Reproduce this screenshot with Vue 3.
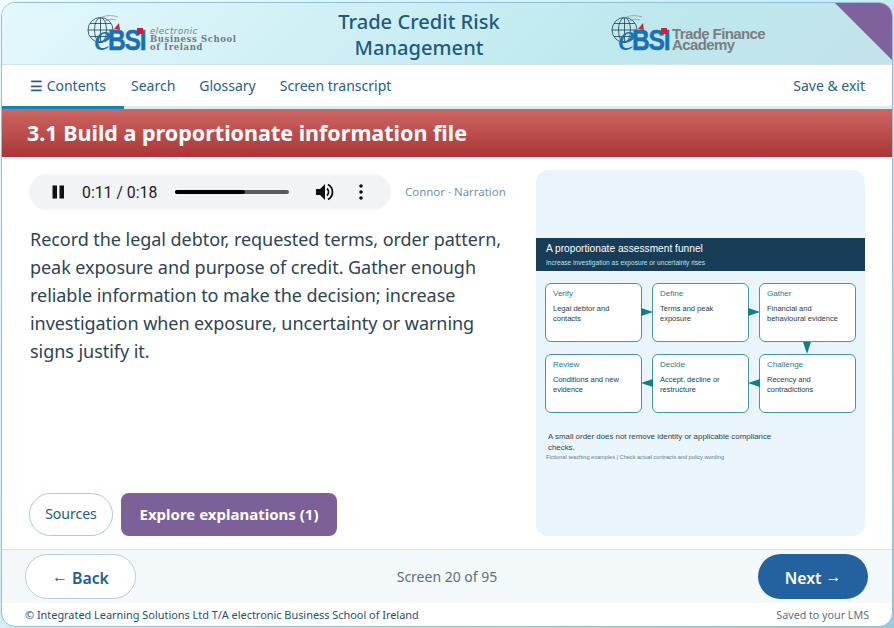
<template>
  <div class="shell">
    <header class="banner">
      <div class="logo left-logo">
        <div class="mark">
          <svg class="globe" viewBox="0 0 38 30" width="38" height="30">
            <g fill="none" stroke="#1f3f52" stroke-width="0.8">
              <circle cx="13.500" cy="15" r="12.500" />
              <ellipse cx="13.500" cy="15" rx="6" ry="12.500" />
              <path d="M1 15h25M3 8.500h21M3 21.500h21M13.500 2.500v25" />
            </g>
            <path d="M13 3c6-3 12-3 18-1M18 6c4-2 8-2 11-1" fill="none" stroke="#8a9aa4" stroke-width="0.8" />
            <path d="M27 14l5-6 1 7z" fill="#d9232e" />
          </svg>
          <span class="mark-e">e</span>
          <span class="bsi">BSI</span>
          <span class="red-dot"></span>
        </div>
        <div class="school">
          <i>electronic</i>
          <span>Business School</span>
          <span>of Ireland</span>
        </div>
      </div>
      <h1 class="course">Trade Credit Risk<br />Management</h1>
      <div class="logo right-logo">
        <div class="mark">
          <svg class="globe" viewBox="0 0 38 30" width="38" height="30">
            <g fill="none" stroke="#1f3f52" stroke-width="0.8">
              <circle cx="13.500" cy="15" r="12.500" />
              <ellipse cx="13.500" cy="15" rx="6" ry="12.500" />
              <path d="M1 15h25M3 8.500h21M3 21.500h21M13.500 2.500v25" />
            </g>
            <path d="M13 3c6-3 12-3 18-1M18 6c4-2 8-2 11-1" fill="none" stroke="#8a9aa4" stroke-width="0.8" />
            <path d="M27 14l5-6 1 7z" fill="#d9232e" />
          </svg>
          <span class="mark-e">e</span>
          <span class="bsi">BSI</span>
          <span class="red-dot"></span>
        </div>
        <div class="academy">
          <span>Trade Finance</span>
          <span>Academy</span>
        </div>
      </div>
      <div class="corner"></div>
    </header>

    <nav class="nav">
      <a class="tab active"><span class="burger">☰</span>&nbsp;Contents</a>
      <a class="tab">Search</a>
      <a class="tab">Glossary</a>
      <a class="tab">Screen transcript</a>
      <a class="tab save">Save &amp; exit</a>
    </nav>

    <div class="title-bar">
      <h2>3.1 Build a proportionate information file</h2>
    </div>

    <main class="body">
      <section class="left">
        <div class="audio-row">
          <div class="player">
            <svg width="14" height="14" viewBox="0 0 14 14"><path d="M1.500 0.500h4.500v13h-4.500zM8.500 0.500h4.500v13h-4.500z" fill="#111" /></svg>
            <span class="time">0:11 / 0:18</span>
            <div class="track"><div class="played" :style="{ width: progress + '%' }"></div></div>
            <svg class="vol" width="20" height="20" viewBox="0 0 20 20">
              <path d="M1 7h4l5-5v16l-5-5H1z" fill="#111" />
              <path d="M12 6.500c2 2 2 5 0 7M13 2.500c6 3.500 6 11.500 0 15" fill="none" stroke="#111" stroke-width="1.800" />
            </svg>
            <svg class="more" width="4" height="16" viewBox="0 0 4 16"><circle cx="2" cy="2" r="1.800" /><circle cx="2" cy="8" r="1.800" /><circle cx="2" cy="14" r="1.800" /></svg>
          </div>
          <span class="voice">Connor · Narration</span>
        </div>
        <p class="copy">Record the legal debtor, requested terms, order pattern, peak exposure and purpose of credit. Gather enough reliable information to make the decision; increase investigation when exposure, uncertainty or warning signs justify it.</p>
        <div class="actions">
          <button class="sources">Sources</button>
          <button class="explore">Explore explanations (1)</button>
        </div>
      </section>

      <aside class="figure">
        <div class="fig-head">
          <div class="fig-title">A proportionate assessment funnel</div>
          <div class="fig-sub">Increase investigation as exposure or uncertainty rises</div>
        </div>
        <div class="flow">
          <div v-for="s in steps" :key="s.name" class="step">
            <div class="step-name">{{ s.name }}</div>
            <div class="step-text">{{ s.text }}</div>
            <span v-if="s.arrow" :class="['arrow', s.arrow]"></span>
          </div>
        </div>
        <p class="fig-note">A small order does not remove identity or applicable compliance checks.</p>
        <p class="fig-foot">Fictional teaching examples | Check actual contracts and policy wording</p>
      </aside>
    </main>

    <div class="pager">
      <button class="back"><span class="glyph">←</span> Back</button>
      <span class="count">Screen 20 of 95</span>
      <button class="next">Next <span class="glyph">→</span></button>
    </div>

    <footer class="foot">
      <span>© Integrated Learning Solutions Ltd T/A electronic Business School of Ireland</span>
      <span class="saved">Saved to your LMS</span>
    </footer>
  </div>
</template>

<script setup>
const progress = 61

const steps = [
  { name: 'Verify', text: 'Legal debtor and contacts', arrow: 'right' },
  { name: 'Define', text: 'Terms and peak exposure', arrow: 'right' },
  { name: 'Gather', text: 'Financial and behavioural evidence', arrow: 'down' },
  { name: 'Review', text: 'Conditions and new evidence', arrow: '' },
  { name: 'Decide', text: 'Accept, decline or restructure', arrow: 'left' },
  { name: 'Challenge', text: 'Recency and contradictions', arrow: 'left' },
]
</script>

<style>
html {
  height: 100%;
  background: linear-gradient(135deg, #eefafd 0%, #c4ebf1 60%, #8ccfdd 100%);
}

body {
  margin: 0;
}

*, *::before, *::after {
  box-sizing: border-box;
}
</style>

<style scoped>
.shell {
  width: 892px;
  height: 625px;
  margin: 2px 0 0 1px;
  border: 1px solid #8fbfdc;
  border-radius: 14px;
  background: #fff;
  overflow: hidden;
  display: flex;
  flex-direction: column;
  font-family: "Noto Sans", sans-serif;
  color: #24608f;
}

.banner {
  position: relative;
  flex: 0 0 62px;
  display: flex;
  align-items: center;
  padding-left: 85px;
  background: linear-gradient(135deg, #e4f8fd 0%, #bde8ee 70%, #c2e3e9 100%);
  border-bottom: 1px solid #cfe4ec;
}

.logo {
  display: flex;
  align-items: center;
  flex: none;
}

.left-logo { width: 152px; }
.right-logo { width: 154px; margin-left: 111px; }

.mark {
  position: relative;
  flex: none;
  width: 57px;
  height: 38px;
}

.globe {
  position: absolute;
  left: 0;
  top: 0;
}

.mark-e {
  position: absolute;
  left: 7px;
  top: 2px;
  font-family: "Liberation Serif", serif;
  font-style: italic;
  font-size: 38px;
  line-height: 40px;
  color: #1a6fb5;
}

.bsi {
  position: absolute;
  left: 21px;
  top: 12px;
  font-family: "Liberation Sans", sans-serif;
  font-weight: 700;
  font-size: 30px;
  line-height: 26px;
  letter-spacing: -1.500px;
  color: #1a6fb5;
  -webkit-text-stroke: 0.5px #1a6fb5;
  transform: scaleX(0.82);
  transform-origin: left center;
}

.red-dot {
  position: absolute;
  left: 50px;
  top: 13px;
  width: 6px;
  height: 6px;
  background: #e0182d;
}

.school {
  display: flex;
  flex-direction: column;
  margin-left: 6px;
  margin-top: 10px;
  font-family: "DejaVu Serif", serif;
  font-size: 8.500px;
  line-height: 8px;
  letter-spacing: 0.600px;
  font-weight: 700;
  white-space: nowrap;
  color: #77797c;
}

.school i {
  font-family: "DejaVu Sans", sans-serif;
  font-weight: 400;
}

.academy {
  display: flex;
  flex-direction: column;
  margin-left: 4px;
  margin-top: 11px;
  font-family: "Liberation Sans", sans-serif;
  font-size: 15px;
  line-height: 11px;
  letter-spacing: -0.600px;
  font-weight: 700;
  white-space: nowrap;
  color: #7b7d80;
}

.course {
  flex: none;
  width: 162px;
  margin: 2px 0 0 99px;
  text-align: center;
  white-space: nowrap;
  font-size: 20.100px;
  line-height: 26px;
  font-weight: 500;
  color: #215a7f;
}

.corner {
  position: absolute;
  top: 0;
  right: 0;
  width: 0;
  height: 0;
  border-top: 57px solid #7f619b;
  border-left: 57px solid transparent;
}

.nav {
  flex: 0 0 44px;
  display: flex;
  align-items: stretch;
  background: #fff;
  border-bottom: 3px solid #e0ecf3;
  font-size: 14px;
}

.tab {
  display: flex;
  align-items: center;
  padding: 0 12px;
  margin-bottom: -3px;
  border-bottom: 3px solid transparent;
}

.burger {
  -webkit-text-stroke: 0.3px #24608f;
}

.tab.active {
  padding-left: 28px;
  padding-right: 18px;
  margin-right: -5px;
  border-bottom-color: #0c86b8;
}

.tab.save {
  margin-left: auto;
  padding-right: 27px;
}

.title-bar {
  flex: 0 0 48px;
  display: flex;
  align-items: center;
  padding-left: 25px;
  background: linear-gradient(#cd6763, #ab3537);
}

.title-bar h2 {
  margin: -2px 0 0;
  color: #fff;
  font-size: 21.500px;
  font-weight: 700;
}

.body {
  flex: 1;
  min-height: 0;
  display: flex;
  padding: 13px 27px 13px 27px;
  gap: 29px;
}

.left {
  flex: 1;
  min-width: 0;
  display: flex;
  flex-direction: column;
}

.audio-row {
  display: flex;
  align-items: center;
  gap: 14px;
  padding-top: 4px;
}

.player {
  flex: none;
  width: 362px;
  height: 36px;
  display: flex;
  align-items: center;
  padding: 0 22px;
  border-radius: 18px;
  background: #f1f3f4;
  color: #1c1c1c;
}

.time {
  margin-left: 17px;
  font-family: "Roboto", sans-serif;
  font-size: 15.800px;
  white-space: nowrap;
}

.track {
  flex: none;
  width: 114px;
  height: 4px;
  margin-left: 18px;
  border-radius: 2px;
  background: #5a5a5a;
}

.played {
  height: 100%;
  border-radius: 2px;
  background: #000;
}

.vol { flex: none; margin-left: 26px; }
.more { flex: none; margin-left: 24px; fill: #111; }

.voice {
  margin-top: -2px;
  font-size: 11.450px;
  white-space: nowrap;
  color: #6f93ad;
}

.copy {
  margin: 15px 0 0 1px;
  font-size: 18px;
  line-height: 28px;
  letter-spacing: -0.050px;
  color: #2c4454;
}

.actions {
  margin-top: auto;
  display: flex;
  gap: 8px;
}

button {
  font-family: inherit;
  cursor: pointer;
}

.sources {
  width: 84px;
  height: 43px;
  padding: 0 0 2px;
  border: 1px solid #a9cbdf;
  border-radius: 22px;
  background: #fff;
  color: #215a7f;
  font-size: 14px;
}

.explore {
  width: 216px;
  height: 43px;
  padding: 0 0 2px;
  border: 0;
  border-radius: 8px;
  background: #7c6098;
  color: #fff;
  font-size: 15px;
  font-weight: 700;
}

.figure {
  flex: 0 0 329px;
  display: flex;
  flex-direction: column;
  border-radius: 12px;
  background: #eaf4fb;
  padding-top: 68px;
  font-family: "Liberation Sans", sans-serif;
}

.fig-head {
  height: 33px;
  padding: 0 10px;
  background: #183d58;
  color: #fff;
}

.fig-title {
  font-size: 10.200px;
  line-height: 11px;
  padding-top: 5px;
}

.fig-sub {
  font-size: 6.600px;
  line-height: 8px;
  margin-top: 5px;
  color: #b9e2ea;
}

.flow {
  display: grid;
  grid-template-columns: repeat(3, 97px);
  grid-auto-rows: 59px;
  gap: 12px 10px;
  padding: 12px 0 0 9px;
}

.step {
  position: relative;
  padding: 5px 12px 5px 7px;
  border: 1.200px solid #3f9aa6;
  border-radius: 6px;
  background: #fff;
}

.step-name {
  font-size: 8px;
  line-height: 10px;
  color: #157f8c;
}

.step-text {
  margin-top: 5px;
  font-size: 7.500px;
  line-height: 10px;
  color: #24404f;
}

.arrow {
  position: absolute;
  width: 0;
  height: 0;
}

.arrow.right {
  right: -12px;
  top: 24px;
  border-left: 12px solid #0d7f89;
  border-top: 4px solid transparent;
  border-bottom: 4px solid transparent;
}

.arrow.left {
  left: -12px;
  top: 24px;
  border-right: 12px solid #0d7f89;
  border-top: 4px solid transparent;
  border-bottom: 4px solid transparent;
}

.arrow.down {
  left: 43px;
  bottom: -13px;
  border-top: 12px solid #0d7f89;
  border-left: 4px solid transparent;
  border-right: 4px solid transparent;
}

.fig-note {
  margin: 19px 0 0 12px;
  width: 240px;
  font-size: 7.900px;
  line-height: 10.500px;
  color: #2c4454;
}

.fig-foot {
  margin: 1px 0 0 10px;
  font-size: 5.600px;
  line-height: 6px;
  color: #667c8b;
}

.pager {
  flex: 0 0 54px;
  display: flex;
  align-items: center;
  justify-content: space-between;
  padding: 0 24px 0 23px;
  background: #f3f8fb;
  border-top: 1px solid #d5e4ec;
}

.back {
  width: 111px;
  height: 45px;
  padding: 2px 0 0;
  border: 1px solid #b5d0e1;
  border-radius: 23px;
  background: #fff;
  color: #24608f;
  font-size: 15.800px;
  font-weight: 600;
}

.glyph {
  display: inline-block;
  font-weight: 400;
  transform: translateY(-2px);
}

.count {
  font-size: 14px;
  color: #5b7180;
}

.next {
  width: 110px;
  height: 45px;
  padding: 2px 0 0;
  border: 0;
  border-radius: 23px;
  background: #24629f;
  color: #fff;
  font-size: 15.800px;
  font-weight: 600;
}

.foot {
  flex: 0 0 23px;
  display: flex;
  align-items: center;
  justify-content: space-between;
  padding: 0 23px;
  font-size: 10.900px;
  white-space: nowrap;
  color: #24506f;
}

.saved {
  font-size: 10.700px;
  color: #5b7180;
}
</style>
